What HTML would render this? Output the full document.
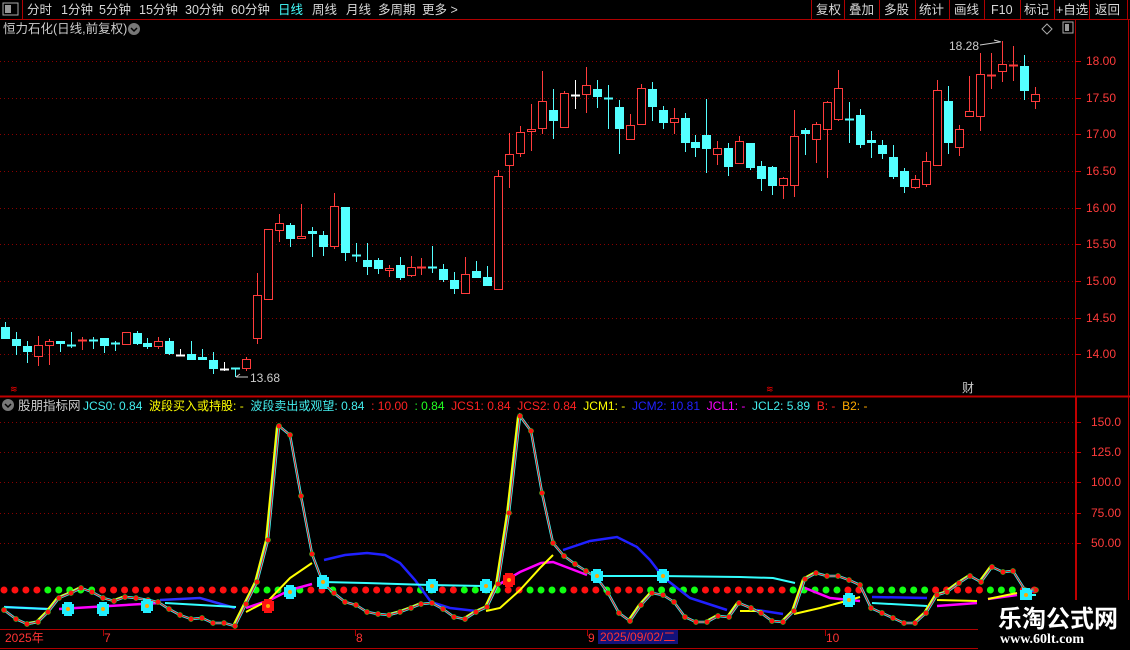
<!DOCTYPE html>
<html><head><meta charset="utf-8"><style>
html,body{margin:0;padding:0;background:#000;width:1130px;height:650px;overflow:hidden;font-family:"Liberation Sans","Noto Sans CJK SC",sans-serif;}
.t{position:absolute;white-space:nowrap;font-size:12px;line-height:14px;}
.n{position:absolute;top:3px;color:#d8d8d8;font-size:12.5px;line-height:14px;white-space:nowrap}
</style></head><body>
<svg id="s" width="1130" height="650" style="position:absolute;left:0;top:0" xmlns="http://www.w3.org/2000/svg"></svg>
<div class="n" style="left:27px">分时</div><div class="n" style="left:61px">1分钟</div><div class="n" style="left:99px">5分钟</div><div class="n" style="left:139px">15分钟</div><div class="n" style="left:185px">30分钟</div><div class="n" style="left:231px">60分钟</div><div class="n" style="left:278px;color:#4ff">日线</div><div class="n" style="left:312px">周线</div><div class="n" style="left:346px">月线</div><div class="n" style="left:378px">多周期</div><div class="n" style="left:422px">更多 &gt;</div>
<div class="n" style="left:816px">复权</div>
<div class="n" style="left:849px">叠加</div>
<div class="n" style="left:884px">多股</div>
<div class="n" style="left:919px">统计</div>
<div class="n" style="left:954px">画线</div>
<div class="n" style="left:991px">F10</div>
<div class="n" style="left:1024px">标记</div>
<div class="n" style="left:1056px">+自选</div>
<div class="n" style="left:1095px">返回</div>
<div class="t" style="left:3px;top:22px;color:#ccc;font-size:12.5px">恒力石化(日线,前复权)</div>
<div class="t" style="left:18px;top:399px;color:#ccc;font-size:12.5px">股朋指标网</div>
<div class="t" style="left:83px;top:399px;font-size:12px"><span style="color:#4ee">JCS0: 0.84</span> <span style="color:#ff0">&nbsp;波段买入或持股: -</span> <span style="color:#4ee">&nbsp;波段卖出或观望: 0.84</span> <span style="color:#f22">&nbsp;: 10.00</span> <span style="color:#2f2">&nbsp;: 0.84</span> <span style="color:#f22">&nbsp;JCS1: 0.84&nbsp; JCS2: 0.84</span> <span style="color:#ff0">&nbsp;JCM1: -</span> <span style="color:#22f">&nbsp;JCM2: 10.81</span> <span style="color:#f0f">&nbsp;JCL1: -</span> <span style="color:#4ee">&nbsp;JCL2: 5.89</span> <span style="color:#f22">&nbsp;B: -</span> <span style="color:#fa0">&nbsp;B2: -</span></div>
<div class="t" style="left:949px;top:39px;color:#ccc">18.28</div>
<div class="t" style="left:250px;top:371px;color:#ccc">13.68</div>
<div class="t" style="left:962px;top:381px;color:#ccc;font-size:12px">财</div>
<div class="t" style="left:5px;top:631px;color:#f33">2025年</div>
<div class="t" style="left:104px;top:631px;color:#f33">7</div>
<div class="t" style="left:356px;top:631px;color:#f33">8</div>
<div class="t" style="left:588px;top:631px;color:#f33">9</div>
<div class="t" style="left:598px;top:630px;color:#f33;background:#12127a;padding:0 2px;width:76px">2025/09/02/二</div>
<div class="t" style="left:826px;top:631px;color:#f33">10</div>
<div class="t" style="left:998px;top:606px;color:#fff;font-size:24px;line-height:28px;font-weight:bold">乐淘公式网</div>
<div class="t" style="left:1000px;top:633px;color:#fff;font-size:14px;font-family:'Liberation Serif',serif;font-weight:bold">www.60lt.com</div>
<script>
var S=document.getElementById('s'),h='';
function L(x1,y1,x2,y2,c,w,d){h+='<line x1="'+x1+'" y1="'+y1+'" x2="'+x2+'" y2="'+y2+'" stroke="'+c+'" stroke-width="'+(w||1)+'"'+(d?' stroke-dasharray="'+d+'"':'')+'/>';}
function R(x,y,w,hh,f,s){h+='<rect x="'+x+'" y="'+y+'" width="'+w+'" height="'+hh+'" fill="'+f+'"'+(s?' stroke="'+s+'"':'')+'/>';}
function T(x,y,t,c,sz){h+='<text x="'+x+'" y="'+y+'" fill="'+c+'" font-size="'+(sz||12)+'" font-family="Liberation Sans,sans-serif">'+t+'</text>';}
L(0,19.5,1130,19.5,'#b00000');L(22.5,0,22.5,19,'#b00000');
[811,844,879,915,949,984,1020,1054,1089,1127].forEach(function(x){L(x+.5,0,x+.5,19,'#b00000')});
L(1075.5,20,1075.5,630,'#b00000');L(1128.5,20,1128.5,600,'#b00000');
L(0,396.5,1130,396.5,'#c00000',2);L(1076,396,1076,600,'#c00000',2);
L(0,629.5,978,629.5,'#b00000');L(0,648.5,978,648.5,'#b00000');
[104,356,588,826].forEach(function(x){L(x-.5,630,x-.5,636,'#b00000')});
R(1063,22,10,11,'#000','#aaa');R(1065,24,4,7,'#999');
R(3,3,15,12,'#000','#aaa');R(5,5,6,8,'#999');
h+='<circle cx="134" cy="29" r="6" fill="#777"/><path d="M131 28l3 3 3-3" stroke="#000" fill="none" stroke-width="1.5"/>';
h+='<circle cx="8" cy="405" r="6" fill="#777"/><path d="M5 404l3 3 3-3" stroke="#000" fill="none" stroke-width="1.5"/>';
h+='<path d="M1047 24l5 5-5 5-5-5z" stroke="#aaa" fill="none"/>';
[[61,'18.00'],[98,'17.50'],[134,'17.00'],[171,'16.50'],[208,'16.00'],[244,'15.50'],[281,'15.00'],[318,'14.50'],[354,'14.00']].forEach(function(a){L(0,a[0]+.5,1075,a[0]+.5,'#8a0000',1,'1 3');L(1075,a[0]+.5,1081,a[0]+.5,'#c00');T(1086,a[0]+4,a[1],'#ff3b3b')});
[[422,'150.0'],[452,'125.0'],[482,'100.0'],[513,'75.00'],[543,'50.00']].forEach(function(a){L(0,a[0]+.5,1075,a[0]+.5,'#8a0000',1,'1 3');L(1075,a[0]+.5,1081,a[0]+.5,'#c00');T(1091,a[0]+4,a[1],'#ff3b3b')});
L(980,45,1000,42,'#ccc');L(994,40,1001,42,'#ccc');L(236,377,248,377,'#ccc');L(236,377,240,374,'#ccc');
T(10,392,'≋','#f00',9);T(766,392,'≋','#f00',9);
var C=[[327,339,322,339,'c'],[339,346,332,355,'c'],[346,352,341,363,'c'],[345,357,336,366,'r'],[341,346,339,365,'r'],[341,344,341,352,'c'],[345,346,332,348,'c'],[340,341,337,350,'r'],[340,341,337,349,'c'],[338,346,338,353,'c'],[343,344,341,351,'c'],[332,345,332,345,'r'],[333,344,331,345,'c'],[343,347,338,349,'c'],[341,347,337,349,'r'],[341,354,338,355,'c'],[355,356,349,356,'w'],[354,360,341,360,'c'],[357,360,349,360,'c'],[360,369,352,374,'c'],[369,370,362,371,'w'],[368,369,368,377,'c'],[359,369,357,371,'r'],[295,339,273,344,'r'],[229,300,229,300,'r'],[223,231,214,242,'r'],[225,239,223,247,'c'],[236,239,204,239,'r'],[231,234,227,257,'c'],[235,247,231,256,'c'],[206,247,193,249,'r'],[207,253,207,261,'c'],[255,256,243,262,'c'],[260,267,243,275,'c'],[260,269,258,274,'c'],[268,271,265,277,'r'],[265,278,257,280,'c'],[267,276,256,277,'r'],[267,268,258,275,'r'],[267,268,246,273,'c'],[269,280,264,282,'c'],[280,289,272,294,'c'],[274,294,257,294,'r'],[271,278,261,278,'c'],[277,286,266,286,'c'],
[176,290,170,290,'r'],[154,166,133,188,'r'],[132,154,126,157,'r'],[129,132,104,151,'r'],[101,129,71,134,'r'],[110,121,89,139,'c'],[93,128,91,128,'r'],[95,96,80,109,'w'],[85,95,67,113,'r'],[89,97,80,108,'c'],[98,99,85,129,'c'],[107,129,100,154,'c'],[125,140,114,140,'r'],[88,125,84,125,'r'],[89,107,82,121,'c'],[110,123,106,129,'c'],[118,123,108,134,'r'],[118,143,113,152,'c'],[142,148,135,157,'c'],[135,149,99,173,'c'],[148,155,141,165,'r'],[148,167,143,176,'c'],[141,164,136,164,'r'],[143,168,143,170,'c'],[166,179,161,191,'c'],[167,186,166,195,'c'],[178,186,177,199,'r'],[136,186,110,197,'r'],[130,134,128,155,'c'],[124,140,122,163,'r'],[102,130,101,178,'r'],[88,120,70,121,'r'],[119,120,102,143,'c'],[115,145,109,148,'c'],[140,143,131,158,'c'],[145,154,140,159,'c'],[157,177,145,179,'c'],[171,187,168,193,'c'],[179,188,175,189,'r'],[161,185,152,187,'r'],[90,166,80,166,'r'],[101,143,86,154,'c'],[129,148,125,156,'r'],[111,117,76,117,'r'],[74,117,53,131,'r'],[75,76,53,89,'r'],[64,72,41,82,'r'],[65,66,46,81,'r'],[66,91,55,100,'c'],[94,102,87,109,'r']];
C.forEach(function(c,i){var x=Math.round(5+i*10.96);var col=c[4]=='c'?'#54ffff':c[4]=='r'?'#ff3c3c':'#fff';
L(x+.5,c[2],x+.5,c[3],col);
if(c[1]-c[0]<=2){L(x-4,c[0]+.5,x+5,c[0]+.5,col,2);}
else if(c[4]=='c')R(x-4,c[0],9,c[1]-c[0],col);
else {h+='<rect x="'+(x-3.5)+'" y="'+(c[0]+.5)+'" width="8" height="'+(c[1]-c[0]-1)+'" fill="#000" stroke="'+col+'"/>';}
});
var G=[[37,95],[246,300],[325,335],[420,432],[460,500],[530,565],[600,610],[640,700],[790,840],[860,935],[985,1020]];
for(var i=0;i<95;i++){var x=4+i*10.96;var g=G.some(function(r){return x>=r[0]&&x<=r[1]});h+='<circle cx="'+x+'" cy="590" r="3.5" fill="'+(g?'#1f1':'#f11')+'"/>';}
function P(pts,c,w){h+='<polyline points="'+pts+'" fill="none" stroke="'+c+'" stroke-width="'+w+'"/>';}
P('4,607 48,609','#3030ff',2.5);P('160,600 200,598 235,608','#3030ff',2.5);
P('324,560 345,555 367,553 385,555 400,563 415,580 431,602 450,608 476,611','#2020ff',2.5);
P('563,550 590,541 617,537 637,547 650,560 663,577 690,598 727,610','#2020ff',2.5);
P('757,610 783,614','#2020ff',2.5);P('872,597 927,598','#2020ff',2.5);P('1027,592 1037,590','#2020ff',2.5);
P('4,607 48,609','#3ff',2);P('165,603 236,607','#3ff',2);P('323,582 366,583 430,585 483,586','#3ff',2);
P('597,576 660,576 740,577 773,578 795,583','#3ff',2);P('872,603 927,606','#3ff',2);P('1020,595 1036,595','#3ff',2);
P('59,609 159,603','#f0f',2.5);P('246,608 270,600 290,590 312,584','#f0f',2.5);P('498,585 520,572 541,563 553,562 587,575','#f0f',2.5);
P('805,588 830,598 860,601','#f0f',2.5);P('937,606 977,603','#f0f',2.5);P('988,599 1017,595','#f0f',2.5);
P('246,612 269,600 290,578 312,563','#ff0',2);P('486,611 500,608 520,590 541,567 553,555','#ff0',2);P('740,611 762,611','#ff0',2);
P('794,614 820,608 850,600 860,597','#ff0',2);P('937,600 977,601','#ff0',2);P('988,599 1017,593','#ff0',2);
var M='4,610 16,619 27,624 38,622 48,612 59,598 71,593 81,588 92,592 103,598 114,601 125,597 136,598 148,600 158,602 169,609 180,615 191,619 202,618 213,623 224,623 235,626 246,604 257,582 268,540 279,426 290,435 301,496 312,554 323,583 334,593 345,602 356,605 367,612 378,614 389,615 400,612 411,608 421,604 432,603 443,609 454,617 465,619 476,612 487,607 498,584 509,513 520,416 531,431 542,493 553,543 564,556 575,564 586,571 597,578 608,593 619,613 630,621 641,605 652,593 663,595 674,602 685,617 696,622 707,622 718,616 729,617 739,603 751,608 761,613 772,621 783,622 794,611 805,579 816,573 827,576 838,576 849,580 860,585 871,608 882,613 893,618 904,623 915,623 926,613 937,595 947,592 959,583 970,576 981,582 992,567 1003,572 1013,571 1025,590 1036,590';
var pts=M.split(' ').map(function(p){return p.split(',').map(Number)});
for(var k=1;k<pts.length;k++){var a=pts[k-1],b=pts[k];if(b[1]<a[1]-1)L(a[0]-1.5,a[1],b[0]-1.5,b[1],'#ff0',3);}
P(M,'#3ff',2.5);P(M,'#f00',1);
pts.forEach(function(a){h+='<circle cx="'+a[0]+'" cy="'+a[1]+'" r="2.6" fill="#f11" stroke="#2c2" stroke-width=".5"/>';});
[[68,609],[103,609],[147,606],[290,592],[323,582],[432,586],[486,586],[597,576],[663,576],[849,600],[1026,595]].forEach(function(p){R(p[0]-6,p[1]-5,12,10,'#2ef');R(p[0]-4,p[1]-7,8,14,'#2ef');h+='<circle cx="'+p[0]+'" cy="'+p[1]+'" r="2" fill="#fa0"/>';});
[[268,606],[509,580]].forEach(function(p){R(p[0]-6,p[1]-5,12,10,'#f11');R(p[0]-4,p[1]-7,8,14,'#f11');h+='<circle cx="'+p[0]+'" cy="'+p[1]+'" r="2" fill="#fa0"/>';});
R(990,600,140,50,'#000');
S.innerHTML=h;
</script>
</body></html>
